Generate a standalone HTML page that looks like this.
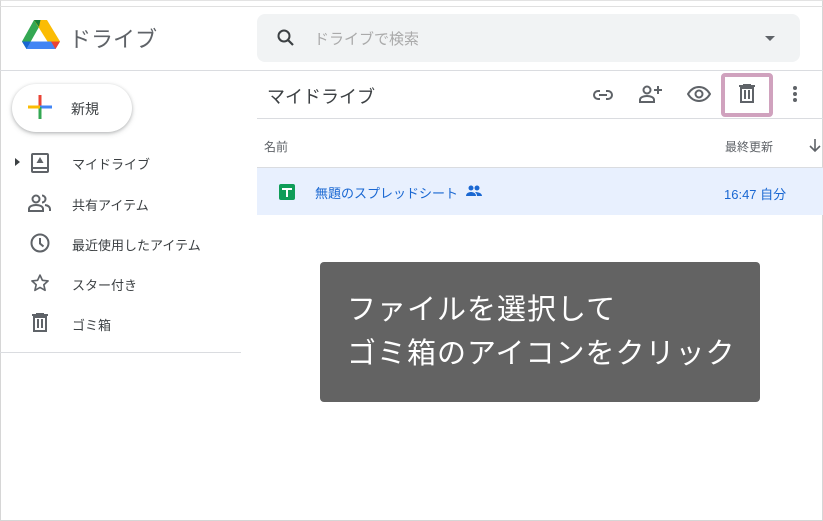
<!DOCTYPE html>
<html><head><meta charset="utf-8"><style>
*{margin:0;padding:0;box-sizing:border-box}
body{width:823px;height:521px;overflow:hidden;background:#fff;font-family:"Liberation Sans","Noto Sans CJK JP",sans-serif;position:relative}
.a{position:absolute}
.frame{left:0;top:0;width:823px;height:521px;border:1px solid #d6d6d6;border-top:1px solid #e3e3e3}
.hl{height:1px;background:#dadce0}
.nav{left:72px;font-size:13px;color:#3c4043}
.ic{left:28px}
</style></head><body>
<div class="a frame"></div>
<div class="a hl" style="left:0;top:6px;width:823px;background:#e0e0e0"></div>
<svg class="a" style="left:22px;top:20px" width="38" height="34" viewBox="0 0 38 34">
<path d="M12 0 0 21.5 4.5 29 17 7z" fill="#34a853"/>
<path d="M12 0h13l13 21.5H25.5z" fill="#fbbc04"/>
<path d="M4.5 29h29l4.5-7.5H9z" fill="#4285f4"/>
<path d="M38 21.5H29l4.5 7.5z" fill="#ea4335"/>
<path d="M0 21.5 4.5 29 9 21.5z" fill="#1967d2"/>
<path d="M12 0h6.5L17 7z" fill="#188038"/>
</svg>
<div class="a" style="left:69px;top:22px;font-size:22px;color:#5f6368">ドライブ</div>
<div class="a" style="left:257px;top:14px;width:543px;height:48px;background:#f1f3f4;border-radius:8px"></div>
<svg class="a" style="left:276px;top:28px" width="20" height="20" viewBox="0 0 20 20"><circle cx="8" cy="8" r="5.5" fill="none" stroke="#3c4043" stroke-width="2"/><path d="M12 12l5 5" stroke="#3c4043" stroke-width="2.2"/></svg>
<div class="a" style="left:314px;top:28px;font-size:15px;color:#aaa">ドライブで検索</div>
<div class="a" style="left:765px;top:36px;border:5px solid transparent;border-top:5px solid #5f6368;border-bottom:0"></div>
<div class="a hl" style="left:0;top:70px;width:823px"></div>
<div class="a" style="left:12px;top:84px;width:120px;height:48px;border-radius:24px;background:#fff;box-shadow:0 1px 3px rgba(60,64,67,.3),0 2px 6px rgba(60,64,67,.15)"></div>
<svg class="a" style="left:28px;top:95px" width="24" height="24" viewBox="0 0 24 24"><rect x="10.5" y="0" width="3" height="12" fill="#ea4335"/><rect x="12" y="10.5" width="12" height="3" fill="#4285f4"/><rect x="10.5" y="12" width="3" height="12" fill="#34a853"/><rect x="0" y="10.5" width="12" height="3" fill="#fbbc04"/></svg>
<div class="a" style="left:71px;top:99px;font-size:14px;color:#3c4043">新規</div>
<div class="a" style="left:15px;top:158px;border:4px solid transparent;border-left:5px solid #3c4043;border-right:0"></div>
<svg class="a" style="left:31px;top:153px" width="18" height="20" viewBox="0 0 18 20"><rect x="1" y="1" width="16" height="18" rx="1" fill="none" stroke="#5f6368" stroke-width="2"/><path d="M1 15h16" stroke="#5f6368" stroke-width="2"/><path d="M9 4l3.5 6h-7z" fill="#5f6368"/></svg>
<div class="a nav" style="top:154px">マイドライブ</div>
<svg class="a ic" style="top:194px" width="24" height="20" viewBox="0 0 24 20"><circle cx="8" cy="5" r="3.5" fill="none" stroke="#5f6368" stroke-width="2"/><path d="M1 17v-2c0-3 4-4 7-4s7 1 7 4v2z" fill="none" stroke="#5f6368" stroke-width="2"/><path d="M14 1.5a3.5 3.5 0 0 1 0 7M17 11c3 .5 5 2 5 4v2" fill="none" stroke="#5f6368" stroke-width="2"/></svg>
<div class="a nav" style="top:195px">共有アイテム</div>
<svg class="a" style="left:30px;top:233px" width="20" height="20" viewBox="0 0 20 20"><circle cx="10" cy="10" r="8.5" fill="none" stroke="#5f6368" stroke-width="2"/><path d="M10 5v5.5l3.5 3" fill="none" stroke="#5f6368" stroke-width="2"/></svg>
<div class="a nav" style="top:235px">最近使用したアイテム</div>
<svg class="a" style="left:30px;top:273px" width="20" height="20" viewBox="0 0 24 24"><path d="M12 2.5l2.9 6.3 6.8.7-5.1 4.6 1.5 6.7L12 17.3l-6.1 3.5 1.5-6.7-5.1-4.6 6.8-.7z" fill="none" stroke="#5f6368" stroke-width="2" stroke-linejoin="round"/></svg>
<div class="a nav" style="top:275px">スター付き</div>
<svg class="a" style="left:32px;top:313px" width="16" height="19" viewBox="0 0 16 19"><path d="M0 2h16M5 1V0h6v1" stroke="#5f6368" stroke-width="2" fill="none"/><path d="M2 4h12v14H2z" fill="none" stroke="#5f6368" stroke-width="2"/><path d="M6 6v9M10 6v9" stroke="#5f6368" stroke-width="2"/></svg>
<div class="a nav" style="top:315px">ゴミ箱</div>
<div class="a hl" style="left:0;top:352px;width:241px"></div>
<div class="a" style="left:267px;top:83px;font-size:18px;color:#3c4043">マイドライブ</div>
<svg class="a" style="left:592px;top:85px" width="22" height="20" viewBox="0 0 22 20"><path d="M8 6H6a4 4 0 0 0 0 8h2M14 6h2a4 4 0 0 1 0 8h-2M7 10h8" fill="none" stroke="#5f6368" stroke-width="2"/></svg>
<svg class="a" style="left:639px;top:83px" width="24" height="22" viewBox="0 0 24 22"><circle cx="8" cy="7" r="3.5" fill="none" stroke="#5f6368" stroke-width="2"/><path d="M1 19v-2c0-3 4-4 7-4s7 1 7 4v2z" fill="none" stroke="#5f6368" stroke-width="2"/><path d="M19 3v8M15 7h8" stroke="#5f6368" stroke-width="2"/></svg>
<svg class="a" style="left:687px;top:85px" width="24" height="18" viewBox="0 0 24 18"><path d="M1 9c3-5 7-7 11-7s8 2 11 7c-3 5-7 7-11 7S4 14 1 9z" fill="none" stroke="#5f6368" stroke-width="2"/><circle cx="12" cy="9" r="3.5" fill="none" stroke="#5f6368" stroke-width="2"/></svg>
<div class="a" style="left:721px;top:73px;width:52px;height:44px;border:4px solid #d0a2be;border-radius:4px"></div>
<svg class="a" style="left:739px;top:84px" width="16" height="19" viewBox="0 0 16 19"><path d="M0 2h16M5 1V0h6v1" stroke="#5f6368" stroke-width="2" fill="none"/><path d="M2 4h12v14H2z" fill="none" stroke="#5f6368" stroke-width="2"/><path d="M6 6v9M10 6v9" stroke="#5f6368" stroke-width="2"/></svg>
<svg class="a" style="left:792px;top:85px" width="6" height="18" viewBox="0 0 6 18"><circle cx="3" cy="3" r="2" fill="#5f6368"/><circle cx="3" cy="9" r="2" fill="#5f6368"/><circle cx="3" cy="15" r="2" fill="#5f6368"/></svg>
<div class="a hl" style="left:257px;top:118px;width:566px"></div>
<div class="a" style="left:264px;top:138px;font-size:12px;color:#5f6368">名前</div>
<div class="a" style="left:725px;top:138px;font-size:12px;color:#5f6368">最終更新</div>
<svg class="a" style="left:809px;top:139px" width="12" height="14" viewBox="0 0 12 14"><path d="M6 0v12M1 7l5 5 5-5" fill="none" stroke="#5f6368" stroke-width="1.6"/></svg>
<div class="a hl" style="left:257px;top:167px;width:566px"></div>
<div class="a" style="left:257px;top:168px;width:566px;height:47px;background:#e8f0fe"></div>
<svg class="a" style="left:279px;top:184px" width="16" height="16" viewBox="0 0 16 16"><rect width="16" height="16" rx="2" fill="#0f9d58"/><path d="M3 5h10M8 5v8" stroke="#fff" stroke-width="2"/></svg>
<div class="a" style="left:315px;top:183px;font-size:13px;color:#1967d2">無題のスプレッドシート</div>
<svg class="a" style="left:466px;top:185px" width="16" height="12" viewBox="0 0 16 12"><circle cx="5" cy="3" r="2.5" fill="#1967d2"/><circle cx="11" cy="3" r="2.5" fill="#1967d2"/><path d="M0 11c0-3 3-4 5-4s5 1 5 4zM9 7c3 0 7 1 7 4h-5c0-2-1-3-2-4z" fill="#1967d2"/></svg>
<div class="a" style="left:724px;top:184px;font-size:13px;color:#1967d2">16:47 自分</div>
<div class="a" style="left:320px;top:262px;width:440px;height:140px;background:#636363;border-radius:4px;color:#fff;font-size:29px;line-height:44px;letter-spacing:1px;padding:26px 0 0 27px">ファイルを選択して<br>ゴミ箱のアイコンをクリック</div>
</body></html>
